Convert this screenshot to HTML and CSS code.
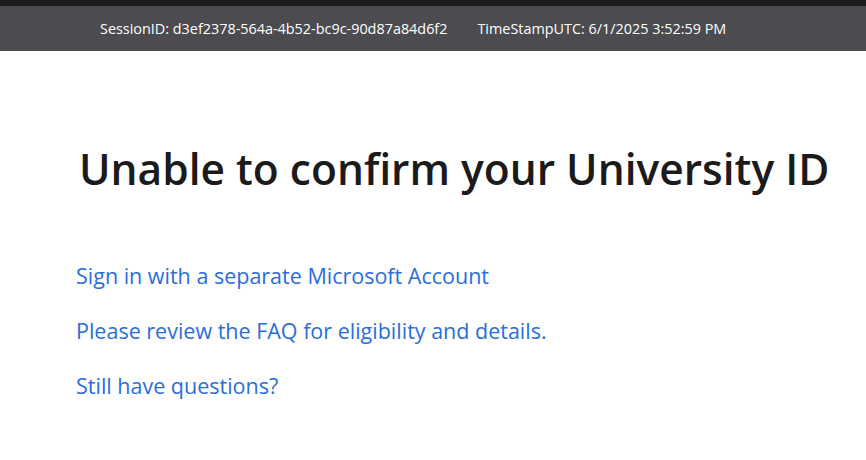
FILE: index.html
```html
<html>
<head>
<title>University ID</title>
<link rel="stylesheet" href="styles.css">
</head>
<body>
<div class="topStrip"></div>
<div class="infoBar">
	<span class="sessionId">SessionID: d3ef2378-564a-4b52-bc9c-90d87a84d6f2</span>
	<span class="timeStamp">TimeStampUTC: 6/1/2025 3:52:59 PM</span>
</div>
<div class="content">
	<h1 class="title">Unable to confirm your University ID</h1>
	<div class="links">
		<a href="#" class="link">Sign in with a separate Microsoft Account</a>
		<a href="#" class="link">Please review the FAQ for eligibility and details.</a>
		<a href="#" class="link">Still have questions?</a>
	</div>
</div>
</body>
</html>
```
FILE: styles.css
```css
body {
	margin: 0;
	background-color: #ffffff;
	font-family: "Open Sans", "Noto Sans", sans-serif;
}
.topStrip {
	height: 6px;
	background-color: #1b1b1b;
}
.infoBar {
	height: 45px;
	background-color: #4b4b50;
	color: #ffffff;
	font-size: 14.4px;
	display: flex;
	align-items: center;
	padding-left: 100px;
	gap: 30px;
}
.content {
	padding-left: 76px;
}
.title {
	margin: 90px 0 0 3px;
	font-size: 42.5px;
	font-weight: 600;
	color: #1b1b1b;
	line-height: 56px;
}
.links {
	display: flex;
	flex-direction: column;
	margin-top: 65px;
	gap: 27px;
}
.link {
	font-size: 21.5px;
	color: #2b6ed8;
	text-decoration: none;
	line-height: 28px;
}
```
